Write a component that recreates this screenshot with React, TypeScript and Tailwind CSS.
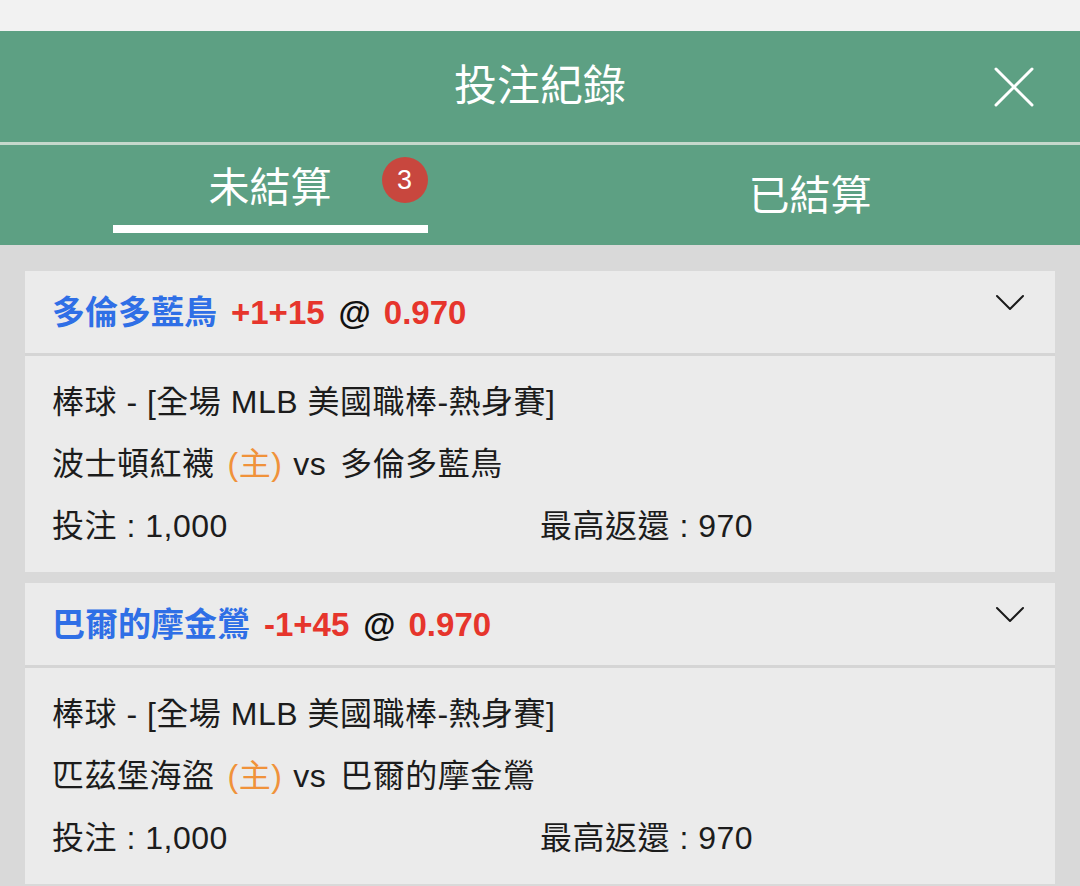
const fontStack = "font-['Liberation_Sans','Noto_Sans_CJK_TC',sans-serif]";

type Bet = {
  pick: string;
  line: string;
  odds: string;
  home: string;
  away: string;
  stake: string;
  maxReturn: string;
};

const bets: Bet[] = [
  {
    pick: "多倫多藍鳥",
    line: "+1+15",
    odds: "0.970",
    home: "波士頓紅襪",
    away: "多倫多藍鳥",
    stake: "1,000",
    maxReturn: "970",
  },
  {
    pick: "巴爾的摩金鶯",
    line: "-1+45",
    odds: "0.970",
    home: "匹茲堡海盜",
    away: "巴爾的摩金鶯",
    stake: "1,000",
    maxReturn: "970",
  },
];

function CloseIcon() {
  return (
    <svg width="40" height="40" viewBox="0 0 40 40" fill="none" stroke="white" strokeWidth="3" strokeLinecap="round">
      <path d="M2 2L38 38M38 2L2 38" />
    </svg>
  );
}

function Chevron() {
  return (
    <svg width="30" height="17" viewBox="0 0 30 17" fill="none" stroke="#1a1a1a" strokeWidth="2" strokeLinecap="round" strokeLinejoin="round">
      <path d="M2 2L15 15L28 2" />
    </svg>
  );
}

function BetCard({ bet }: { bet: Bet }) {
  return (
    <section className="bg-[#ebebeb]">
      <div className="flex h-[85px] items-start justify-between border-b-[3px] border-[#d5d5d5] pl-[27px] pr-[30px]">
        <p className="self-center text-[33px] font-bold leading-none">
          <span className="text-[#2f6fe6]">{bet.pick}</span>
          <span className="ml-[14px] text-[#e6352c]">{bet.line}</span>
          <span className="ml-[14px] text-[#111]">@</span>
          <span className="ml-[13px] text-[#e6352c]">{bet.odds}</span>
        </p>
        <div className="mt-[23px]">
          <Chevron />
        </div>
      </div>
      <div className="px-[27px] py-[15px] text-[32px] leading-[62px] tracking-[0.5px] text-[#1c1c1c]">
        <p>棒球 - [全場 MLB 美國職棒-熱身賽]</p>
        <p>
          {bet.home}
          <span className="ml-[13px] text-[#f0923a]">(主)</span>
          <span className="ml-[11px]">vs</span>
          <span className="ml-[14px]">{bet.away}</span>
        </p>
        <div className="grid grid-cols-2">
          <p>投注 : {bet.stake}</p>
          <p>最高返還 : {bet.maxReturn}</p>
        </div>
      </div>
    </section>
  );
}

export default function App() {
  return (
    <div className={`min-h-[886px] bg-[#d9d9d9] ${fontStack}`}>
      <div className="h-[31px] bg-[#f2f2f2]" />
      <header className="grid h-[111px] grid-cols-[1fr_auto_1fr] items-center bg-[#5da083]">
        <div />
        <h1 className="text-[43px] leading-none text-white">投注紀錄</h1>
        <div className="flex justify-end pr-[46px]">
          <CloseIcon />
        </div>
      </header>
      <div className="h-[3px] bg-[#c5d8cc]" />
      <nav className="grid h-[100px] grid-cols-2 bg-[#5da083] text-[41px] leading-[56px] text-white">
        <div className="flex flex-col items-center pt-[15px]">
          <span className="relative">
            未結算
            <span className="absolute left-[calc(100%+50px)] top-[-3px] flex h-[46px] w-[46px] items-center justify-center rounded-full bg-[#c8473e] text-[27px] leading-none">
              3
            </span>
          </span>
          <span className="mt-[9px] h-[8px] w-[315px] bg-white" />
        </div>
        <div className="flex justify-center pt-[23px]">
          <span>已結算</span>
        </div>
      </nav>
      <main className="flex flex-col gap-[11px] px-[25px] pt-[26px]">
        {bets.map((bet) => (
          <BetCard key={bet.pick} bet={bet} />
        ))}
      </main>
    </div>
  );
}
